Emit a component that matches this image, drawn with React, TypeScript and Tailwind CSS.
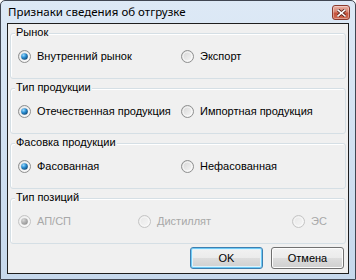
import React from "react";

function Radio({ checked = false, disabled = false }: { checked?: boolean; disabled?: boolean }) {
  const id = disabled ? "d" : "e";
  return (
    <svg width="13" height="13" viewBox="0 0 13 13" className="shrink-0">
      <defs>
        <linearGradient id={`ring-${id}`} x1="0" y1="0" x2="1" y2="1">
          <stop offset="0" stopColor={disabled ? "#e6e6e6" : "#d2d2d2"} />
          <stop offset="1" stopColor={disabled ? "#f7f7f7" : "#fbfbfb"} />
        </linearGradient>
        <radialGradient id={`dot-${id}`} cx="0.35" cy="0.3" r="0.8">
          <stop offset="0" stopColor={disabled ? "#d8d8d8" : "#9fdcff"} />
          <stop offset="0.45" stopColor={disabled ? "#b4b4b4" : "#2b8fd3"} />
          <stop offset="1" stopColor={disabled ? "#8e8e8e" : "#0b3f6c"} />
        </radialGradient>
      </defs>
      <circle cx="6.5" cy="6.5" r="6" fill={`url(#ring-${id})`} stroke={disabled ? "#c4c4c4" : "#8e8f8f"} />
      <circle cx="6.5" cy="6.5" r="4.5" fill="none" stroke="#ffffff" strokeOpacity={disabled ? 0.5 : 0.7} />
      {checked && <circle cx="6.5" cy="6.5" r="3.3" fill={`url(#dot-${id})`} />}
    </svg>
  );
}

function Option({
  label,
  checked,
  disabled,
  width,
}: {
  label: string;
  checked?: boolean;
  disabled?: boolean;
  width?: string;
}) {
  return (
    <div className={`flex items-center gap-[6px] ${width ?? ""}`}>
      <Radio checked={checked} disabled={disabled} />
      <span className={`whitespace-nowrap ${disabled ? "text-[#a8a8a8]" : "text-black"}`}>{label}</span>
    </div>
  );
}

function Group({ title, children, first }: { title: string; children: React.ReactNode; first?: boolean }) {
  return (
    <div
      className={`h-[46px] shrink-0 rounded-[3px] border border-[#d5dfe5] shadow-[inset_1px_1px_0_#ffffff] ${first ? "" : "mt-[9px]"}`}
    >
      <div className="-mt-[8px] ml-[4px] w-fit bg-[#f0f0f0] px-[1px] leading-[13px] text-black">{title}</div>
      <div className="mt-[11px] flex h-[13px] items-center pl-[7px]">{children}</div>
    </div>
  );
}

function CloseButton() {
  return (
    <div className="mt-[4px] flex h-[15px] w-[18px] items-center justify-center self-start rounded-[3px] border border-[#8a3a2e] bg-[linear-gradient(#eab1a4,#d8826f_45%,#c4523c_55%,#d06a52)] shadow-[inset_0_0_0_1px_rgba(255,255,255,0.35)]">
      <svg width="9" height="8" viewBox="0 0 9 8">
        <path d="M1 1 L8 7 M8 1 L1 7" stroke="#5a1f17" strokeWidth="3.2" strokeLinecap="square" />
        <path d="M1 1 L8 7 M8 1 L1 7" stroke="#ffffff" strokeWidth="1.6" strokeLinecap="square" />
      </svg>
    </div>
  );
}

function Button({ label, isDefault }: { label: string; isDefault?: boolean }) {
  return (
    <button
      type="button"
      className={`h-[22px] w-[73px] rounded-[3px] border bg-[linear-gradient(#f2f2f2,#ebebeb_50%,#dddddd_50%,#cfcfcf)] text-[11px] leading-[13px] text-black ${
        isDefault
          ? "border-[#3c7fb1] shadow-[inset_0_0_0_1px_#6fcaf5,inset_0_0_0_2px_#dff3fc]"
          : "border-[#707070] shadow-[inset_0_0_0_1px_#fcfcfc]"
      }`}
    >
      {label}
    </button>
  );
}

export default function App() {
  return (
    <div className="flex h-[280px] w-[356px] flex-col overflow-hidden rounded-t-[5px] border border-[#404652] bg-linear-to-b from-[#dde9f6] to-[#c6d8ec] font-['Liberation_Sans',Arial,sans-serif] text-[11px]">
      <div className="flex h-[22px] shrink-0 items-center justify-between pl-[7px] pr-[5px]">
        <span className="font-['Noto_Sans','Liberation_Sans',sans-serif] text-[11.5px] text-black">
          Признаки сведения об отгрузке
        </span>
        <CloseButton />
      </div>

      <div className="mx-[6px] mb-[5px] flex flex-1 flex-col border border-[#1e1e1e] bg-[#f0f0f0] px-[2px] pt-[9px]">
        <Group title="Рынок" first>
          <Option label="Внутренний рынок" checked width="w-[163px]" />
          <Option label="Экспорт" />
        </Group>

        <Group title="Тип продукции">
          <Option label="Отечественная продукция" checked width="w-[163px]" />
          <Option label="Импортная продукция" />
        </Group>

        <Group title="Фасовка продукции">
          <Option label="Фасованная" checked width="w-[163px]" />
          <Option label="Нефасованная" />
        </Group>

        <Group title="Тип позиций">
          <Option label="АП/СП" checked disabled width="w-[120px]" />
          <Option label="Дистиллят" disabled width="w-[154px]" />
          <Option label="ЭС" disabled />
        </Group>

        <div className="mt-[3px] flex justify-end gap-[8px] pr-[2px]">
          <Button label="OK" isDefault />
          <Button label="Отмена" />
        </div>
      </div>
    </div>
  );
}
